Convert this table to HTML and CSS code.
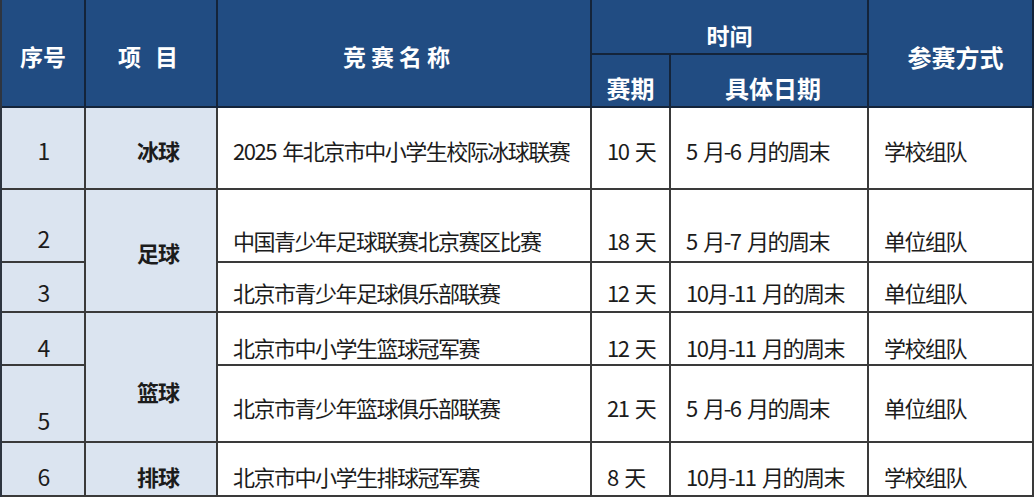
FILE: index.html
```html
<!DOCTYPE html>
<html lang="zh-CN">
<head>
<meta charset="utf-8">
<title>北京市青少年赛事</title>
<link rel="stylesheet" href="styles.css">
</head>
<body>
<table class="sched">
  <colgroup>
    <col class="c-no">
    <col class="c-item">
    <col class="c-name">
    <col class="c-days">
    <col class="c-date">
    <col class="c-mode">
  </colgroup>
  <thead>
    <tr class="h1">
      <th rowspan="2" class="th-no">序号</th>
      <th rowspan="2" class="th-item">项 目</th>
      <th rowspan="2" class="th-name">竞赛名称</th>
      <th colspan="2" class="th-time">时间</th>
      <th rowspan="2" class="th-mode">参赛方式</th>
    </tr>
    <tr class="h2">
      <th class="th-sub">赛期</th>
      <th class="th-sub th-date">具体日期</th>
    </tr>
  </thead>
  <tbody>
    <tr class="r1">
      <td class="no">1</td>
      <td class="item">冰球</td>
      <td class="txt">2025 年北京市中小学生校际冰球联赛</td>
      <td class="txt">10 天</td>
      <td class="txt">5 月-6 月的周末</td>
      <td class="txt">学校组队</td>
    </tr>
    <tr class="r2">
      <td class="no">2</td>
      <td class="item item-foot" rowspan="2">足球</td>
      <td class="txt">中国青少年足球联赛北京赛区比赛</td>
      <td class="txt">18 天</td>
      <td class="txt">5 月-7 月的周末</td>
      <td class="txt">单位组队</td>
    </tr>
    <tr class="r3">
      <td class="no">3</td>
      <td class="txt">北京市青少年足球俱乐部联赛</td>
      <td class="txt">12 天</td>
      <td class="txt">10月-11 月的周末</td>
      <td class="txt">单位组队</td>
    </tr>
    <tr class="r4">
      <td class="no">4</td>
      <td class="item item-bask" rowspan="2">篮球</td>
      <td class="txt">北京市中小学生篮球冠军赛</td>
      <td class="txt">12 天</td>
      <td class="txt">10月-11 月的周末</td>
      <td class="txt">学校组队</td>
    </tr>
    <tr class="r5">
      <td class="no no-low">5</td>
      <td class="txt">北京市青少年篮球俱乐部联赛</td>
      <td class="txt">21 天</td>
      <td class="txt">5 月-6 月的周末</td>
      <td class="txt">单位组队</td>
    </tr>
    <tr class="r6">
      <td class="no">6</td>
      <td class="item">排球</td>
      <td class="txt">北京市中小学生排球冠军赛</td>
      <td class="txt">8 天</td>
      <td class="txt">10月-11 月的周末</td>
      <td class="txt">学校组队</td>
    </tr>
  </tbody>
</table>
</body>
</html>
```
FILE: styles.css
```css
html, body {
  margin: 0;
  padding: 0;
  background: #ffffff;
}

body {
  font-family: "Noto Sans CJK SC", "Noto Sans", sans-serif;
  color: #1c1c1c;
}

.sched {
  table-layout: fixed;
  border-collapse: separate;
  border-spacing: 0;
  width: 1034px;
  border-left: 2px solid #2e3540;
}

.c-no { width: 84px; }
.c-item { width: 132px; }
.c-name { width: 374px; }
.c-days { width: 79px; }
.c-date { width: 198px; }
.c-mode { width: 165px; }

th, td {
  box-sizing: border-box;
  line-height: 30px;
  white-space: nowrap;
  overflow: hidden;
}

/* header */
th {
  background: #214c82;
  color: #ffffff;
  font-weight: 700;
  font-size: 23px;
  text-align: center;
  vertical-align: middle;
  border-right: 2px solid #14243a;
  border-bottom: 2px solid #14243a;
  padding: 6px 0 0 0;
}

.h1 { height: 55px; }
.h2 { height: 53px; }

.th-item { word-spacing: 9px; padding-right: 6px; }
.th-name { letter-spacing: 5px; padding-right: 10px; }
.th-time { padding-top: 17px; }
.th-sub { padding-top: 15px; font-size: 24px; }
.th-date { padding-left: 8px; }
.th-mode { padding-top: 8px; padding-left: 10px; font-size: 24px; }

/* body */
td {
  font-size: 22px;
  vertical-align: middle;
  border-right: 2px solid #3a3a3a;
  border-bottom: 2px solid #3a3a3a;
  padding: 0;
  background: #ffffff;
}

.no {
  background: #dbe4f0;
  text-align: center;
  padding-left: 2px;
  font-size: 23px;
}

.item {
  background: #dbe4f0;
  font-weight: 700;
  font-size: 22px;
  text-align: left;
  padding-left: 51px;
  letter-spacing: -1px;
}

.txt {
  text-align: left;
  padding-left: 15px;
  letter-spacing: -1.5px;
  word-spacing: 3px;
}

.r1 { height: 82px; }
.r2 { height: 73px; }
.r3 { height: 50px; }
.r4 { height: 53px; }
.r5 { height: 77px; }
.r6 { height: 54px; }

.r1 td { padding-top: 4px; }
.r2 td { padding-top: 28px; }
.r2 .no { padding-top: 24px; }
.r3 td { padding-top: 10px; }
.r4 td { padding-top: 17px; }
.r5 td { padding-top: 7px; }
.r5 .no-low { padding-top: 33px; }
.r6 td { padding-top: 14px; }

.r2 .item-foot { padding-top: 3px; }
.r4 .item-bask { padding-top: 28px; }
```
